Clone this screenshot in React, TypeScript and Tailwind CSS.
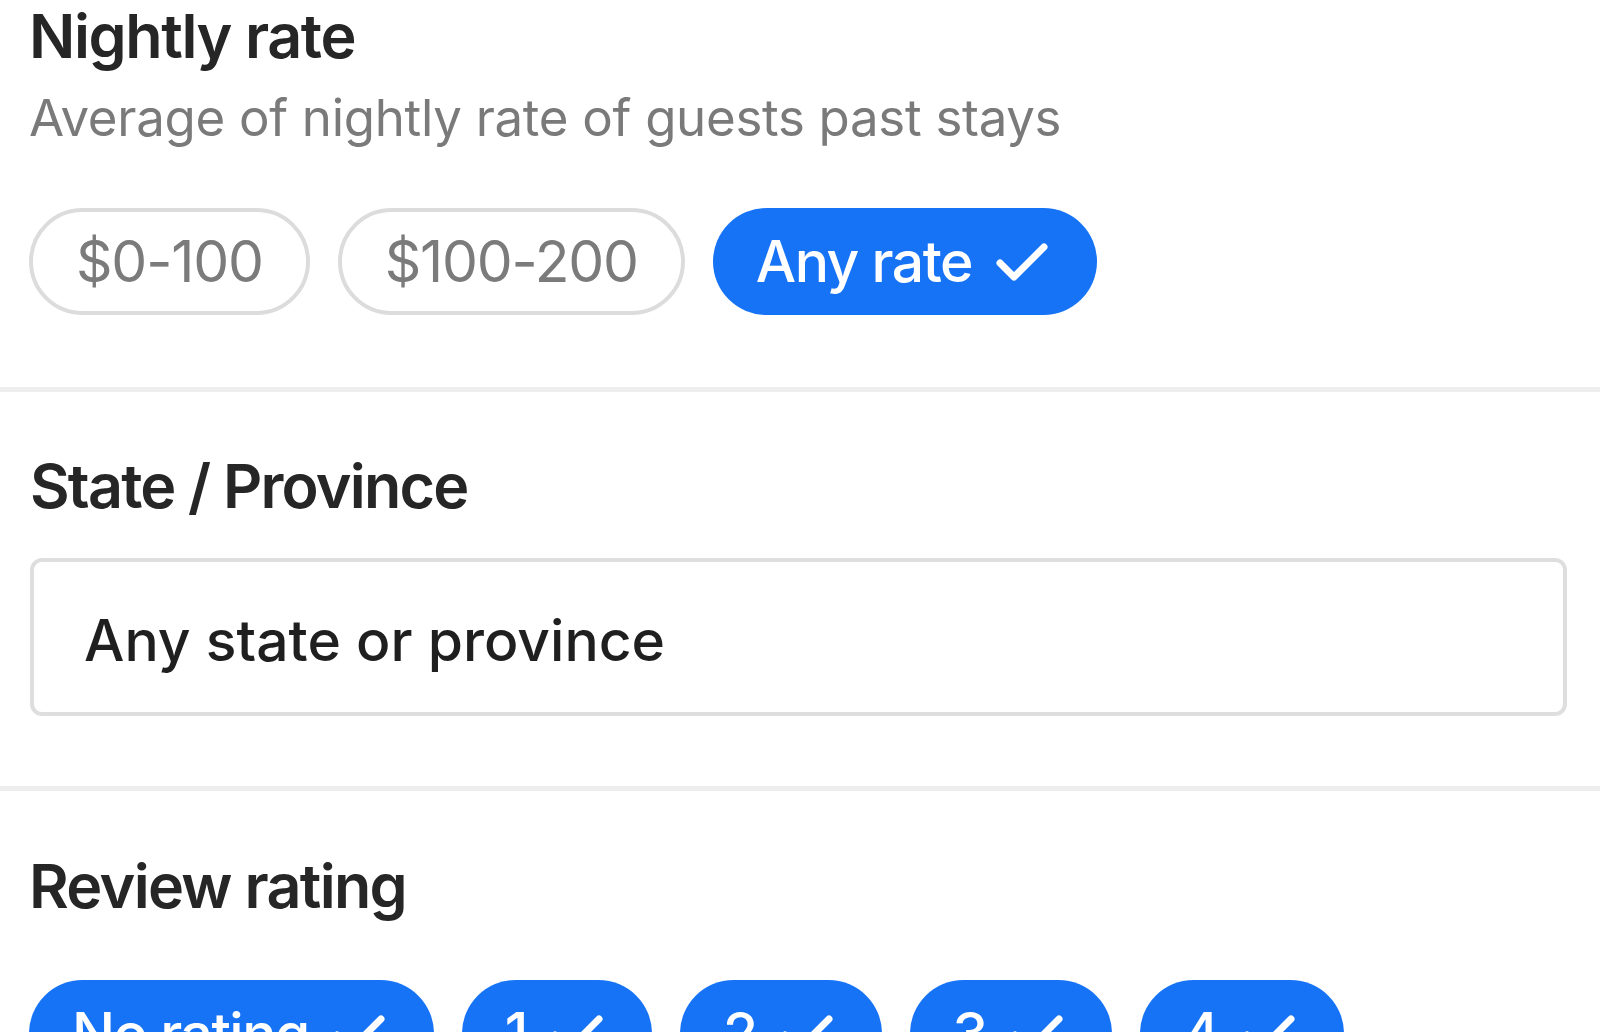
import React from "react";

const Check = ({ className }: { className?: string }) => (
  <svg viewBox="0 0 54 40" fill="none" stroke="currentColor" strokeWidth={7} strokeLinecap="round" strokeLinejoin="round" className={className}>
    <path d="M5 21l14 14L49 5" />
  </svg>
);

const Chip = ({ label, active }: { label: string; active?: boolean }) =>
  active ? (
    <div className="flex h-[107px] items-center gap-[23px] rounded-full bg-[#1673f6] pl-[43px] pr-[48px] text-[57px] font-medium tracking-[-1.5px] text-white">
      <span>{label}</span>
      <Check className="h-[40px] w-[54px]" />
    </div>
  ) : (
    <div className="flex h-[107px] items-center rounded-full border-[4px] border-[#dcdcdc] px-[43px] text-[57px] tracking-[-1.2px] text-[#7b7b7b]">
      {label}
    </div>
  );

export default function App() {
  return (
    <div
      className="h-[1032px] w-[1600px] overflow-hidden bg-white"
      style={{ fontFamily: "Inter, 'Liberation Sans', sans-serif" }}
    >
      <div className="px-[29px] pb-[72px]">
        <div className="text-[61px] font-semibold leading-[73px] tracking-[-1.4px] text-[#262626]">Nightly rate</div>
        <div className="mt-[14px] text-[51px] leading-[61px] tracking-[-0.3px] text-[#7a7a7a]">
          Average of nightly rate of guests past stays
        </div>
        <div className="mt-[60px] flex gap-[28px]">
          <Chip label="$0-100" />
          <Chip label="$100-200" />
          <Chip label="Any rate" active />
        </div>
      </div>
      <div className="h-[5px] bg-[#eeeeee]" />
      <div className="pb-[70px] pl-[30px] pr-[33px] pt-[58px]">
        <div className="text-[61px] font-semibold leading-[73px] tracking-[-1.8px] text-[#262626]">State / Province</div>
        <div className="mt-[35px] flex h-[158px] items-center rounded-[12px] border-[4px] border-[#dedede] pl-[50px] pt-[8px] text-[57px] font-medium text-[#1f1f1f]">
          Any state or province
        </div>
      </div>
      <div className="h-[5px] bg-[#eeeeee]" />
      <div className="px-[29px] pt-[59px]">
        <div className="text-[61px] font-semibold leading-[73px] tracking-[-1.7px] text-[#262626]">Review rating</div>
        <div className="mt-[57px] flex gap-[28px]">
          <Chip label="No rating" active />
          <Chip label="1" active />
          <Chip label="2" active />
          <Chip label="3" active />
          <Chip label="4" active />
        </div>
      </div>
    </div>
  );
}
